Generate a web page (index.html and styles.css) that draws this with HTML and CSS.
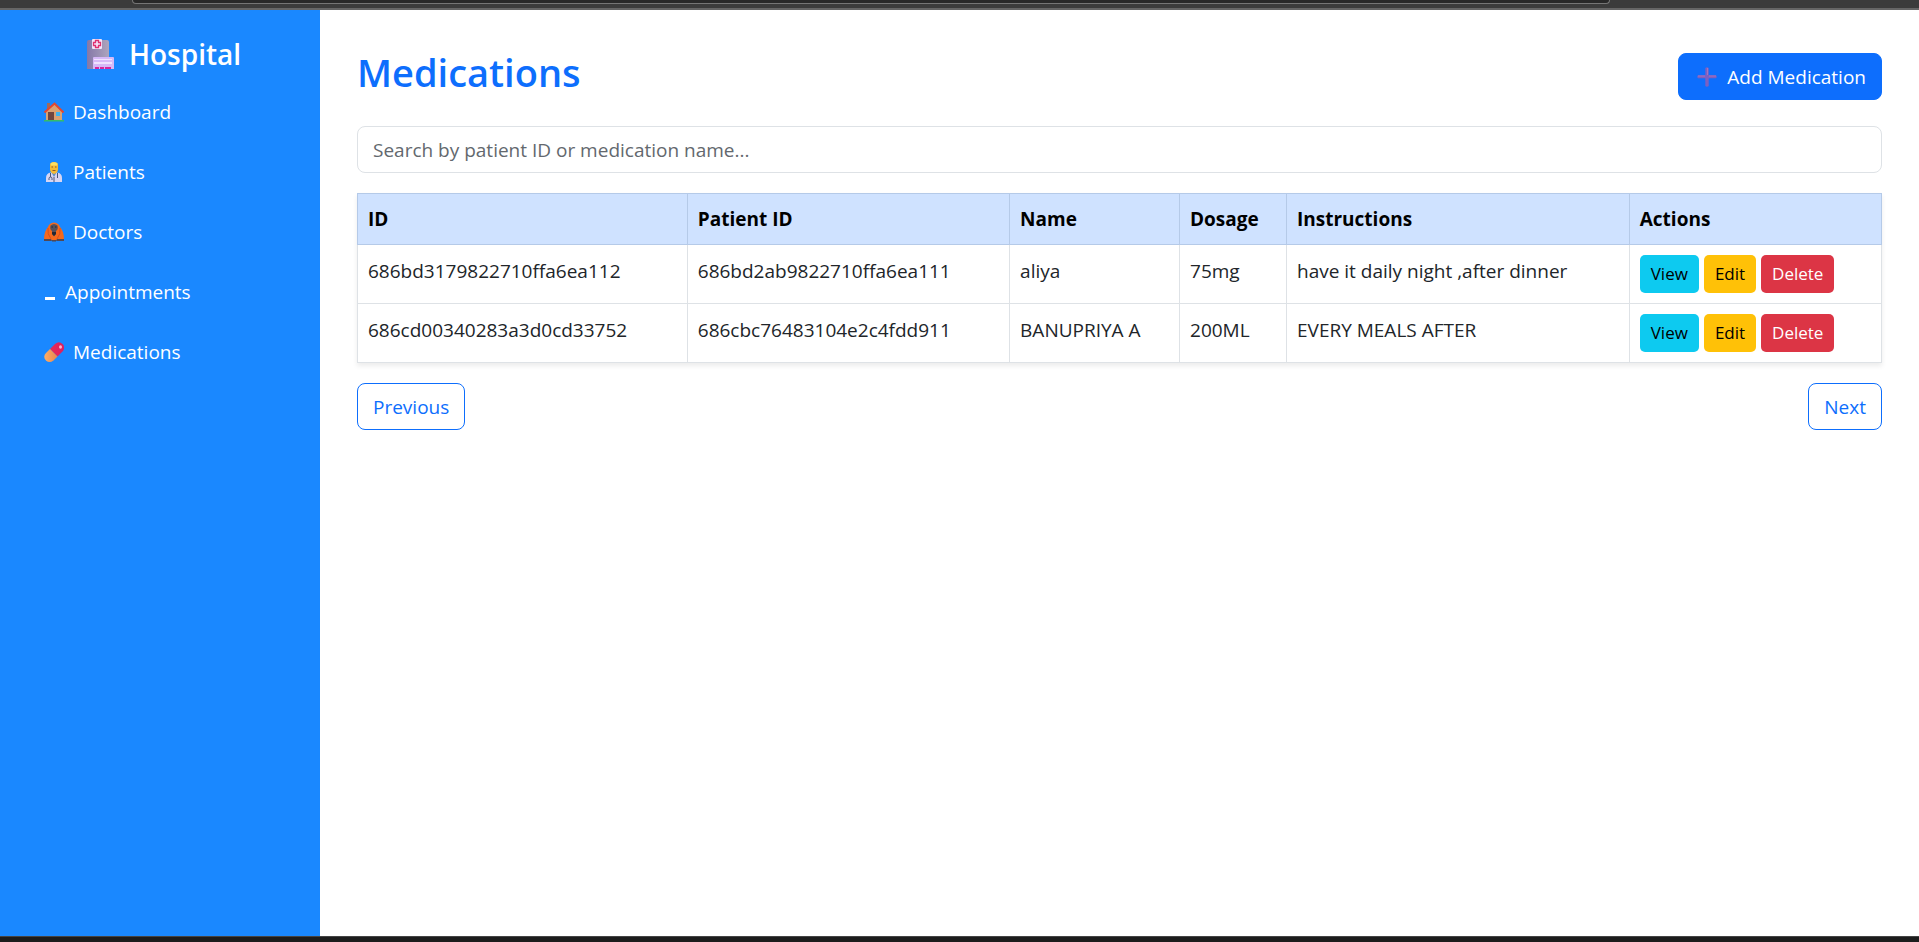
FILE: index.html
```html
<!DOCTYPE html>
<html lang="en">
<head>
<meta charset="utf-8">
<title>Medications</title>
<link rel="stylesheet" href="styles.css">
</head>
<body>
<div class="browser-top"><div class="address-pill"></div></div>
<div class="app">
  <aside class="sidebar">
    <h2 class="brand">
      <svg class="brand-icon" viewBox="0 0 27 30" aria-hidden="true">
        <defs><linearGradient id="wall" x1="0" x2="1"><stop offset="0" stop-color="#8578a8"/><stop offset="1" stop-color="#ada5bd"/></linearGradient></defs>
        <path fill="url(#wall)" d="M0 3q0-2 2-2h18q2 0 2 2v27H0z"/>
        <rect x="5" y="0" width="10" height="10" rx="1" fill="#f3e6fb"/>
        <path d="M8.500 1.500h3v2h2v3h-2v2h-3v-2h-2v-3h2z" fill="#f3e6fb" stroke="#e0306f" stroke-width="1.300"/>
        <path fill="#d6b9f7" d="M6 19q0-1 1-1h19q1 0 1 1v11H6z"/>
        <path fill="#f0e2ff" d="M7 20h18v1H7zM7 23h18v2H7z"/>
        <path fill="#d8279b" d="M8 28h4v2H8zM13 28h4v2h-4zM18 28h6v2h-6z"/>
      </svg>
      Hospital
    </h2>
    <nav class="nav">
      <a class="nav-link" href="#">
        <svg class="icon" viewBox="0 0 20 20" aria-hidden="true">
          <path fill="#a06a5e" d="M3 1h3v6H3z"/>
          <path fill="#d9a273" d="M2 9.500 10.500 2 18 9.500V18H2z"/>
          <path fill="none" stroke="#e4472f" stroke-width="2" d="M.5 10.500 10.500 1.600 19.500 10.500"/>
          <path fill="#704740" d="M4 10h6v8H4z"/>
          <path fill="#3fb4ee" d="M12 10h4v4h-4z"/>
          <path fill="#35bd68" d="M0 18h20v1.500H0z"/>
        </svg>
        Dashboard
      </a>
      <a class="nav-link" href="#">
        <svg class="icon" viewBox="0 0 20 20" aria-hidden="true">
          <path fill="#d7d5f2" d="M2 20v-4q0-5 5-5.500h6q5 .5 5 5.500v4z"/>
          <path fill="#5d8dc4" d="M7.500 10.500h5L10 15z"/>
          <path fill="#f6bb35" d="M6 3q0-3 4-3t4 3v4q0 4-4 5-4-1-4-5z"/>
          <path fill="#ffdf62" d="M6.500 1.500Q10-.8 13.500 1.500l-.5 2H7z"/>
          <path fill="#8a5a28" d="M7.500 4.500h1.500v1H7.500zM11 4.500h1.500v1H11zM8.500 8h3v1h-3z"/>
          <path fill="none" stroke="#4a5678" d="M6.500 11v4M5 18v-1.500q0-1.500 1.500-1.500T8 16.500V18M13.500 11v5M10 15v5"/>
        </svg>
        Patients
      </a>
      <a class="nav-link" href="#">
        <svg class="icon" viewBox="0 0 20 20" aria-hidden="true">
          <path fill="#f5691d" d="M0 18q0-9 4-13 1-4 6-4.500 5 .5 6 4.500 4 4 4 13z"/>
          <path fill="none" stroke="#d9501c" d="M4 6q-1 6 3 11M16 6q1 6-3 11"/>
          <path fill="#55505a" d="M6.500 3.500Q10 .5 13.500 3.500q1 4-1.500 5.500v3l-2 2.500L8 12V9Q5.500 7.500 6.500 3.500z"/>
          <path fill="#252733" d="M7.500 4.500H9v1H7.500zM11 4.500h1.500v1H11zM8 10h4v2l-2 2-2-2z"/>
          <path fill="#534852" d="M0 17h7l1 2H0zM13 17h7v2h-8zM8 18h4v1.500H8z"/>
        </svg>
        Doctors
      </a>
      <a class="nav-link" href="#">
        <svg class="icon icon-narrow" viewBox="0 0 12 20" aria-hidden="true"><path fill="#fff" d="M1 15h10v3H1z"/></svg>
        Appointments
      </a>
      <a class="nav-link" href="#">
        <svg class="icon" viewBox="0 0 20 20" aria-hidden="true">
          <defs>
            <linearGradient id="pillA" x1="0" x2="1"><stop offset="0" stop-color="#e52b55"/><stop offset="1" stop-color="#dc1f62"/></linearGradient>
            <linearGradient id="pillB" x1="0" x2="1"><stop offset="0" stop-color="#ffae65"/><stop offset="1" stop-color="#e5854f"/></linearGradient>
          </defs>
          <path fill="url(#pillA)" d="M6 7l5-5q4-3.500 7.500 0t0 7.500l-5 5z"/>
          <path fill="url(#pillB)" d="M6 7l7.500 7.500-4 4q-4 3-7.500 0-3.500-4 0-7.500z"/>
          <ellipse cx="16.500" cy="5" rx="1.500" ry="1.800" fill="#ffb4cb"/>
        </svg>
        Medications
      </a>
    </nav>
  </aside>
  <main class="main">
    <header class="page-head">
      <h1 class="title">Medications</h1>
      <button class="btn btn-primary" type="button">
        <svg class="icon" viewBox="0 0 20 20" aria-hidden="true">
          <path fill="#7c60c1" d="M8.300 1q1.700-1.500 3.400 0v7.300H19q1.500 1.500 0 3h-7.300V19q-1.700 1.500-3.400 0v-7.700H1q-1.500-1.500 0-3h7.300z"/>
          <path stroke="#a573bb" d="M10.500 1v7M1 9h7M12 9h7"/>
        </svg>
        Add Medication
      </button>
    </header>
    <input class="search" type="text" aria-label="Search medications" placeholder="Search by patient ID or medication name...">
    <table class="table">
      <colgroup><col class="c-id"><col class="c-patient"><col class="c-name"><col class="c-dosage"><col class="c-instr"><col></colgroup>
      <thead>
        <tr><th scope="col">ID</th><th scope="col">Patient ID</th><th scope="col">Name</th><th scope="col">Dosage</th><th scope="col">Instructions</th><th scope="col">Actions</th></tr>
      </thead>
      <tbody>
        <tr>
          <td>686bd3179822710ffa6ea112</td><td>686bd2ab9822710ffa6ea111</td><td>aliya</td><td>75mg</td><td>have it daily night ,after dinner</td>
          <td><div class="actions"><button class="btn-sm view" type="button">View</button><button class="btn-sm edit" type="button">Edit</button><button class="btn-sm delete" type="button">Delete</button></div></td>
        </tr>
        <tr>
          <td>686cd00340283a3d0cd33752</td><td>686cbc76483104e2c4fdd911</td><td>BANUPRIYA A</td><td>200ML</td><td>EVERY MEALS AFTER</td>
          <td><div class="actions"><button class="btn-sm view" type="button">View</button><button class="btn-sm edit" type="button">Edit</button><button class="btn-sm delete" type="button">Delete</button></div></td>
        </tr>
      </tbody>
    </table>
    <div class="pager">
      <button class="btn btn-outline" type="button">Previous</button>
      <button class="btn btn-outline" type="button">Next</button>
    </div>
  </main>
</div>
<div class="taskbar"></div>
</body>
</html>
```
FILE: styles.css
```css
* { box-sizing: border-box; }

body {
  margin: 0;
  min-height: 100vh;
  display: flex;
  flex-direction: column;
  background: #fff;
  color: #212529;
  font: 19px/30px "Open Sans", "Noto Sans", sans-serif;
}

button, input { font: inherit; }

.browser-top {
  height: 10px;
  padding: 0 309px 0 132px;
  background: #3b3b3b;
  border-bottom: 2px solid #666;
}

.address-pill {
  height: 4px;
  background: #282828;
  border: 1px solid #757575;
  border-top: 0;
  border-radius: 0 0 16px 16px;
}

.app { flex: 1; display: flex; }

.sidebar {
  flex: none;
  width: 320px;
  padding: 25px 20px;
  background: #1a88ff;
  color: #fff;
}

.brand {
  display: flex;
  justify-content: center;
  align-items: center;
  gap: 15px;
  margin: 0 0 14px;
  padding-left: 8px;
  font-size: 28px;
  line-height: 38px;
  font-weight: 600;
}

.brand-icon { width: 27px; height: 30px; }

.nav { display: flex; flex-direction: column; gap: 10px; }

.nav-link {
  display: flex;
  align-items: center;
  gap: 9px;
  padding: 10px 24px;
  color: #fff;
  text-decoration: none;
}

.icon { flex: none; width: 20px; height: 20px; }
.icon-narrow { width: 12px; }

.main { flex: 1; min-width: 0; padding: 37px; }

.page-head {
  display: flex;
  justify-content: space-between;
  align-items: flex-end;
  margin-bottom: 26px;
}

.title {
  margin: 0 0 3px;
  color: #0d6efd;
  font-size: 38px;
  line-height: 50px;
  font-weight: 600;
}

.page-head .btn { margin-top: 6px; }

.btn {
  display: flex;
  align-items: center;
  gap: 10px;
  height: 47px;
  padding: 0 15px;
  border: 1px solid #0d6efd;
  border-radius: 8px;
}

.btn-primary { padding-left: 18px; background: #0d6efd; color: #fff; }
.btn-outline { background: #fff; color: #0d6efd; }

.search {
  display: block;
  width: 100%;
  height: 47px;
  margin-bottom: 20px;
  padding: 0 15px;
  border: 1px solid #dee2e6;
  border-radius: 8px;
}

.search::placeholder { color: #63686e; opacity: 1; }

.table {
  width: 100%;
  margin-bottom: 20px;
  table-layout: fixed;
  border-collapse: collapse;
  box-shadow: 0 3px 5px rgba(0, 0, 0, 0.08);
}

.c-id { width: 21.64%; }
.c-patient { width: 21.15%; }
.c-name { width: 11.15%; }
.c-dosage { width: 7.02%; }
.c-instr { width: 22.49%; }

.table th, .table td {
  padding: 10px;
  border: 1px solid #dee2e6;
  text-align: left;
  vertical-align: top;
  line-height: 32px;
}

.table th {
  background: #cfe2ff;
  border-color: #b5cae8;
  color: #000;
  font-weight: 700;
  line-height: 30px;
}

.actions { display: flex; gap: 5px; }

.btn-sm {
  height: 38px;
  padding: 0 11px;
  border: 0;
  border-radius: 5px;
  color: #000;
  font-size: 17px;
}

.view { background: #0dcaf0; }
.edit { background: #ffc107; }
.delete { background: #dc3545; color: #fff; }

.pager { display: flex; justify-content: space-between; }

.taskbar {
  height: 6px;
  background: #1c1c1c;
  border-top: 1px solid #444;
}
```
